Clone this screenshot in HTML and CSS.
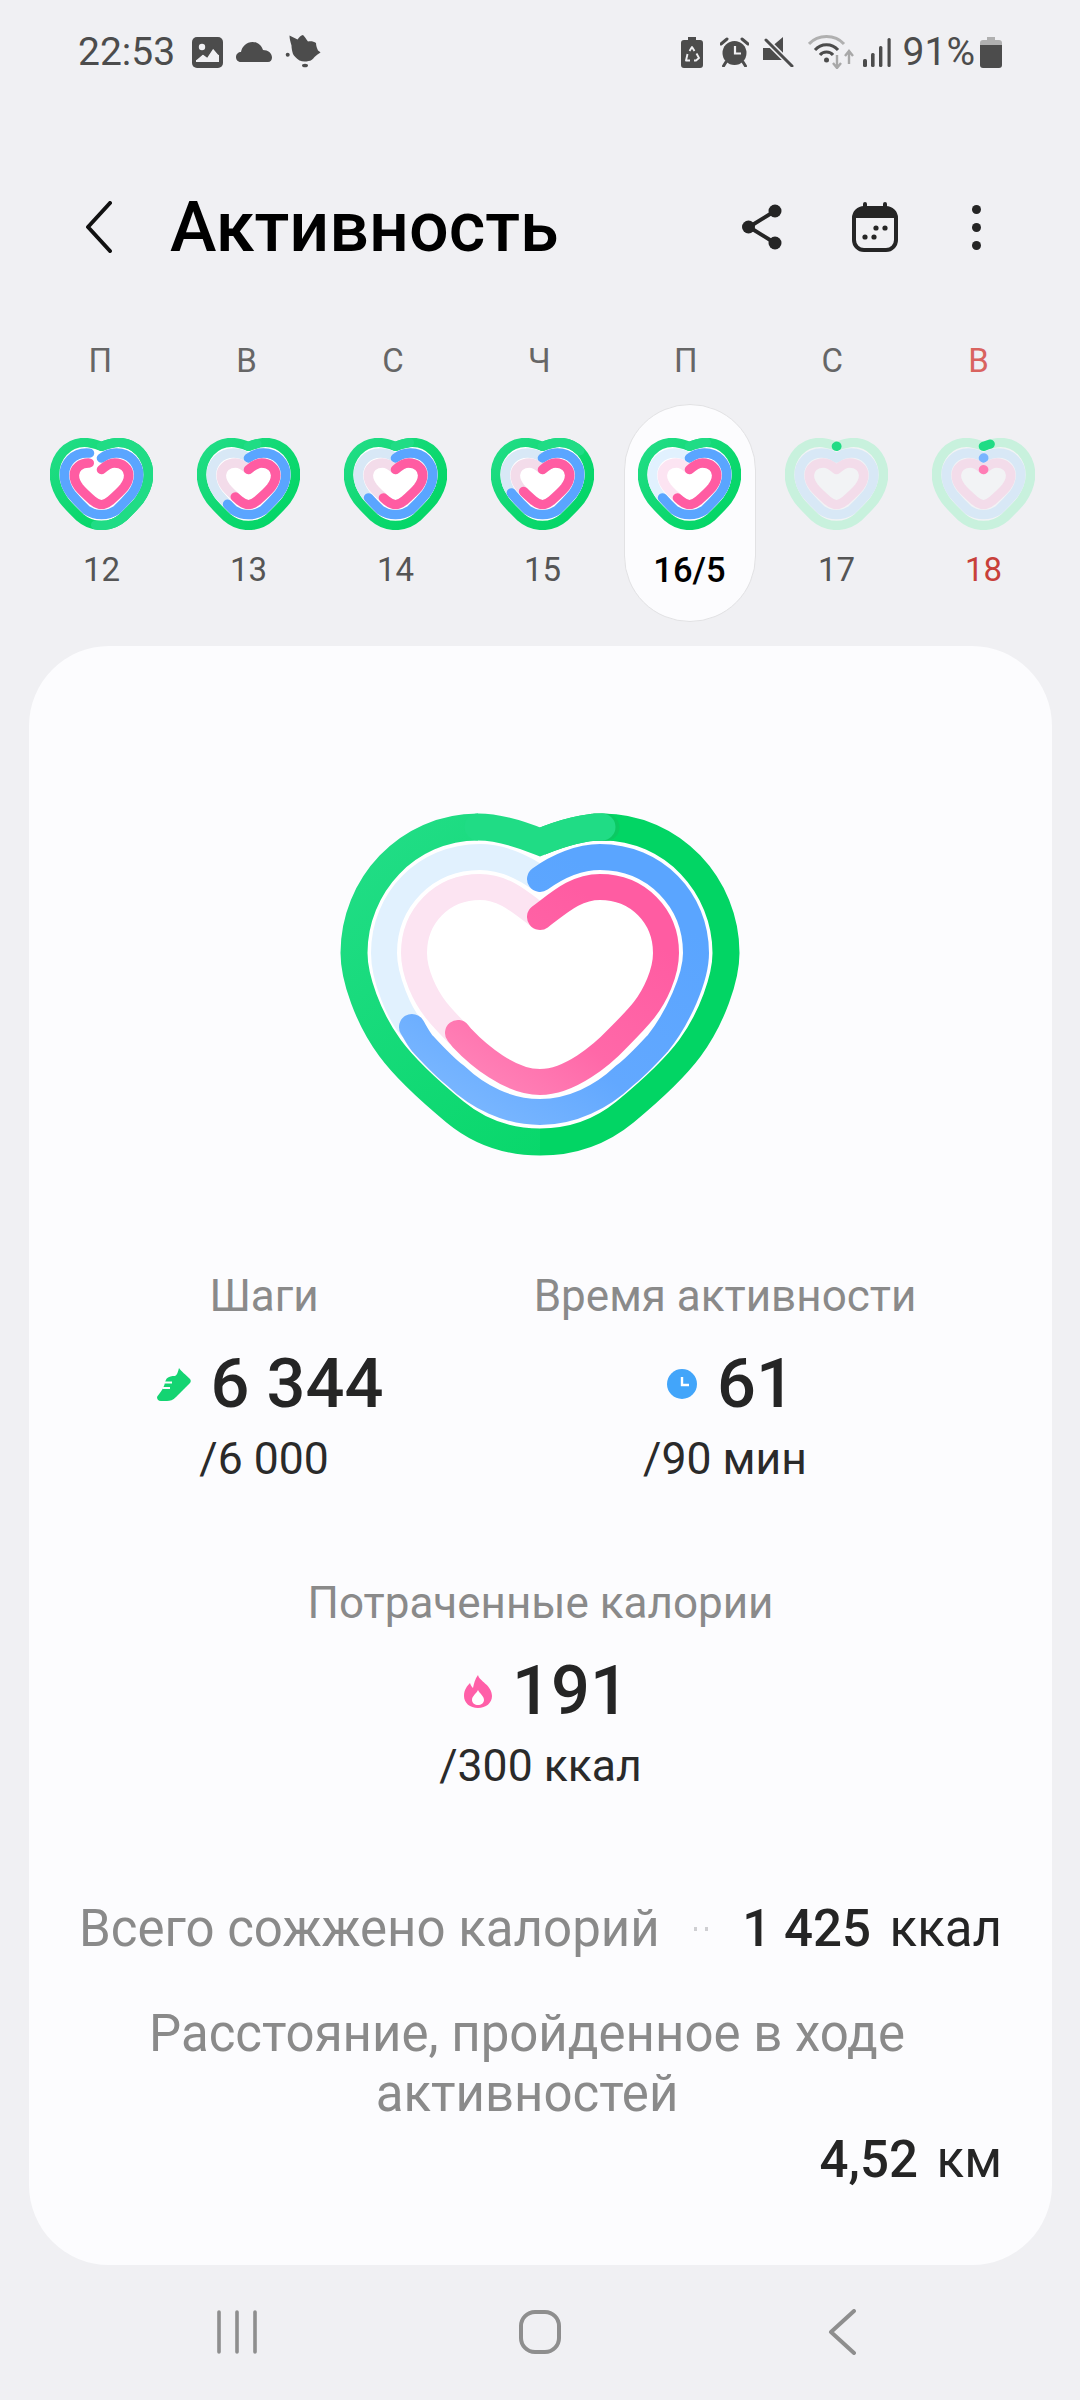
FILE: index.html
```html
<!DOCTYPE html>
<html lang="ru">

<head>
    <meta charset="UTF-8">
    <meta name="viewport" content="width=device-width, initial-scale=1.0">
    <title>Активность</title>
    <link rel="stylesheet" href="styles.css">
</head>

<body>
    <!-- Shared heart outlines, every path starts at the notch and runs clockwise -->
    <svg class="defs" aria-hidden="true">
        <defs>
            <linearGradient id="green-grad" x1="0" y1="0" x2="1" y2="1">
                <stop offset="0" stop-color="#22dd87"/>
                <stop offset="0.55" stop-color="#0dd86f"/>
                <stop offset="1" stop-color="#00d563"/>
            </linearGradient>
            <linearGradient id="big-green" gradientUnits="userSpaceOnUse" x1="-190" y1="20" x2="60" y2="330">
                <stop offset="0" stop-color="#22dd87"/>
                <stop offset="1" stop-color="#07d769"/>
            </linearGradient>
            <linearGradient id="big-blue" gradientUnits="userSpaceOnUse" x1="60" y1="60" x2="-90" y2="300">
                <stop offset="0" stop-color="#5aa5ff"/>
                <stop offset="0.6" stop-color="#62a8ff"/>
                <stop offset="1" stop-color="#7cb8ff"/>
            </linearGradient>
            <linearGradient id="big-pink" gradientUnits="userSpaceOnUse" x1="60" y1="90" x2="-60" y2="260">
                <stop offset="0" stop-color="#ff5ca2"/>
                <stop offset="0.6" stop-color="#ff68a8"/>
                <stop offset="1" stop-color="#ff80b6"/>
            </linearGradient>
            <path id="mg" pathLength="100" d="M0 8.6C6 6.4 11 4.6 17 4.6C34 4.6 47 19.6 47 38C47 47 44 55 38 64C33.5 70 27 76.5 21.5 82C15.5 87.5 8.5 90.3 0 90.3C-8.5 90.3 -15.5 87.5 -21.5 82C-27 76.5 -33.5 70 -38 64C-44 55 -47 47 -47 38C-47 19.6 -34 4.6 -17 4.6C-11 4.6 -6 6.4 0 8.6"/>
            <path id="mb" pathLength="100" d="M0 20.7C4 17.5 9 15.5 15 15.5C28 15.5 37.2 26 37.2 38C37.2 45 34.5 52 30.5 57.5C26 63 20.5 69 15 74.5C10 78 6 79.2 0 79.2C-6 79.2 -10 78 -15 74.5C-20.5 69 -26 63 -30.5 57.5C-34.5 52 -37.2 45 -37.2 38C-37.2 26 -28 15.5 -15 15.5C-9 15.5 -4 17.5 0 20.7"/>
            <path id="mp" pathLength="100" d="M0 32.7C4 29 9 25.8 13 25.8C21 25.8 27.2 31 27.2 38.5C27.2 43 25.5 47 22.5 51C18.5 56 13.5 60.5 8.5 65C6 67 3 68.9 0 68.9C-3 68.9 -6 67 -8.5 65C-13.5 60.5 -18.5 56 -22.5 51C-25.5 47 -27.2 43 -27.2 38.5C-27.2 31 -21 25.8 -13 25.8C-9 25.8 -4 29 0 32.7"/>
        </defs>
    </svg>

    <!-- Status bar -->
    <div class="status">
        <div class="status-left">
            <span class="time">22:53</span>
            <svg width="31" height="31" viewBox="0 0 31 31"><rect width="31" height="31" rx="5" fill="#4c4c4c"/><circle cx="10" cy="10" r="3.2" fill="#f0f0f3"/><path d="M4 23L11 17L15 20L21 11L27 18V25H4Z" fill="#f0f0f3"/><path d="M4 22.5L11 16.5L15 19.5L21 10.5L27 17.5" fill="none" stroke="#4c4c4c" stroke-width="1.6"/></svg>
            <svg width="36" height="20" viewBox="0 0 36 20"><path d="M5 20C1.5 20 0 17.5 0 15C0 12 2.5 10 5 10C6 4.5 10.5 0 16.5 0C22 0 25.5 3.5 27 8C32 8 36 11 36 15.5C36 18 34.5 20 32 20Z" fill="#4c4c4c"/></svg>
            <svg width="36" height="36" viewBox="0 0 36 36"><path d="M4.5 1.5C7 3 10 4 12.5 5.5C14 3.5 16 1 18 1C20 3 21 5 23 7.5C26 7 29 7.5 31 9C31 12 32 14 33 16.5C34 17 35 18 35.5 18.5C33 20 31 21.5 29.5 23C28 25 26 27 23.5 27C20 28 17 27.5 14.5 26.5C11 24 9 22 8 20C7 17 6.5 14 6.5 11.5C5.5 8 4.5 5 4.5 1.5Z" fill="#4c4c4c"/><circle cx="2.7" cy="20.7" r="2" fill="#4c4c4c"/><ellipse cx="20" cy="31.5" rx="3" ry="1.8" fill="#4c4c4c"/></svg>
        </div>
        <div class="status-right">
            <svg class="icon-recycle" width="22" height="31" viewBox="0 0 22 31"><path d="M7 0H15V3H19C21 3 22 4 22 6V28C22 30 21 31 19 31H3C1 31 0 30 0 28V6C0 4 1 3 3 3H7Z" fill="#4c4c4c"/><path d="M8.5 14L11 10L13.5 14M15.5 16.5L18 21L15 23.5H13M9 23.5H5L6.5 17" fill="none" stroke="#f0f0f3" stroke-width="1.9" stroke-linejoin="round"/></svg>
            <svg width="29" height="30" viewBox="0 0 29 30"><circle cx="14.5" cy="16" r="12" fill="#4c4c4c"/><path d="M15 9V16.5H21" fill="none" stroke="#f0f0f3" stroke-width="2.2"/><path d="M1 7L7 2M28 7L22 2M6 25L3.5 29M23 25L25.5 29" stroke="#4c4c4c" stroke-width="3" stroke-linecap="round"/></svg>
            <svg width="31" height="30" viewBox="0 0 31 30"><path d="M0 11H7L20 0V23H0Z" fill="#4c4c4c"/><path d="M1 1L29 29" stroke="#f0f0f3" stroke-width="6"/><path d="M3 3L29 29" stroke="#4c4c4c" stroke-width="3" stroke-linecap="round"/></svg>
            <svg class="icon-wifi" width="46" height="34" viewBox="0 0 46 34"><path d="M1 9C10 -1 27 -1 36 9" fill="none" stroke="#b0b0b0" stroke-width="3"/><path d="M7 15C13 8 24 8 30 15M12 20C15 16 22 16 25 20" fill="none" stroke="#4c4c4c" stroke-width="3"/><circle cx="18.5" cy="25" r="2.5" fill="#4c4c4c"/><path d="M29 20V32M25 28L29 33L33 28M41 29V17M37 21L41 16L45 21" fill="none" stroke="#a8a8a8" stroke-width="2.4"/></svg>
            <svg width="28" height="29" viewBox="0 0 28 29"><rect x="0" y="21" width="4" height="8" rx="1.5" fill="#4c4c4c"/><rect x="8" y="15" width="3.6" height="14" rx="1.5" fill="#4c4c4c"/><rect x="16" y="8" width="3.4" height="21" rx="1.5" fill="#4c4c4c"/><rect x="24.5" y="0" width="3.2" height="29" rx="1.5" fill="#4c4c4c"/></svg>
            <span class="percent">91%</span>
            <svg width="22" height="31" viewBox="0 0 22 31"><path d="M7 0H15V3H19C21 3 22 4 22 6V8H0V6C0 4 1 3 3 3H7Z" fill="#b0b0b0"/><path d="M0 8H22V28C22 30 21 31 19 31H3C1 31 0 30 0 28Z" fill="#4c4c4c"/></svg>
        </div>
    </div>

    <!-- Title row -->
    <header class="appbar">
        <svg class="back" width="27" height="52" viewBox="0 0 27 52"><path d="M25 2L3 26L25 50" fill="none" stroke="#111" stroke-width="4" stroke-linecap="round" stroke-linejoin="round"/></svg>
        <h1 class="title">Активность</h1>
        <svg class="share" width="40" height="46" viewBox="0 0 40 46"><path d="M33 7L7 23L33 39" fill="none" stroke="#252525" stroke-width="4"/><circle cx="33" cy="7" r="6.5" fill="#252525"/><circle cx="6.5" cy="23" r="6.5" fill="#252525"/><circle cx="33" cy="39" r="6.5" fill="#252525"/></svg>
        <svg class="calendar" width="46" height="50" viewBox="0 0 46 50"><path d="M13 7V2M33 7V2" stroke="#252525" stroke-width="4" stroke-linecap="round"/><rect x="2" y="6" width="42" height="42" rx="10" fill="none" stroke="#252525" stroke-width="4"/><path d="M2 16C2 10 6 6 12 6H34C40 6 44 10 44 16Z" fill="#252525"/><circle cx="24" cy="26" r="2.6" fill="#252525"/><circle cx="33" cy="26" r="2.6" fill="#252525"/><circle cx="13" cy="35" r="2.6" fill="#252525"/><circle cx="22" cy="35" r="2.6" fill="#252525"/></svg>
        <div class="more"><span></span><span></span><span></span></div>
    </header>

    <!-- Week -->
    <div class="week-letters">
        <span>П</span><span>В</span><span>С</span><span>Ч</span><span>П</span><span>С</span><span class="red-soft">В</span>
    </div>
    <div class="week">
        <div class="day">
            <svg class="ring" viewBox="-51.5 0 103 95" preserveAspectRatio="none">
                <use href="#mg" class="r-fill"/>
                <use href="#mg" class="r-line" stroke="url(#green-grad)"/>
                <use href="#mg" class="r-line r-over" stroke-dasharray="52 100"/>
                <use href="#mb" class="r-line r-blue" stroke-dasharray="94 100"/>
                <use href="#mp" class="r-line r-pink" stroke-dasharray="91 100"/>
            </svg>
            <span class="num">12</span>
        </div>
        <div class="day">
            <svg class="ring" viewBox="-51.5 0 103 95" preserveAspectRatio="none">
                <use href="#mg" class="r-fill"/>
                <use href="#mg" class="r-line" stroke="url(#green-grad)"/>
                <use href="#mg" class="r-line r-over" stroke-dasharray="3 100"/>
                <use href="#mb" class="r-line r-blue-pale"/>
                <use href="#mb" class="r-line r-blue" stroke-dasharray="61 100"/>
                <use href="#mp" class="r-line r-pink-pale"/>
                <use href="#mp" class="r-line r-pink" stroke-dasharray="60 100"/>
            </svg>
            <span class="num">13</span>
        </div>
        <div class="day">
            <svg class="ring" viewBox="-51.5 0 103 95" preserveAspectRatio="none">
                <use href="#mg" class="r-fill"/>
                <use href="#mg" class="r-line" stroke="url(#green-grad)"/>
                <use href="#mg" class="r-line r-over" stroke-dasharray="5 100"/>
                <use href="#mb" class="r-line r-blue-pale"/>
                <use href="#mb" class="r-line r-blue" stroke-dasharray="65 100"/>
                <use href="#mp" class="r-line r-pink-pale"/>
                <use href="#mp" class="r-line r-pink" stroke-dasharray="59 100"/>
            </svg>
            <span class="num">14</span>
        </div>
        <div class="day">
            <svg class="ring" viewBox="-51.5 0 103 95" preserveAspectRatio="none">
                <use href="#mg" class="r-fill"/>
                <use href="#mg" class="r-line" stroke="url(#green-grad)"/>
                <use href="#mg" class="r-line r-over" stroke-dasharray="14 100"/>
                <use href="#mb" class="r-line r-blue-pale"/>
                <use href="#mb" class="r-line r-blue" stroke-dasharray="68 100"/>
                <use href="#mp" class="r-line r-pink-pale"/>
                <use href="#mp" class="r-line r-pink" stroke-dasharray="65 100"/>
            </svg>
            <span class="num">15</span>
        </div>
        <div class="day day-now">
            <svg class="ring" viewBox="-51.5 0 103 95" preserveAspectRatio="none">
                <use href="#mg" class="r-fill"/>
                <use href="#mg" class="r-line" stroke="url(#green-grad)"/>
                <use href="#mg" class="r-line r-over" stroke-dasharray="6 100"/>
                <use href="#mb" class="r-line r-blue-pale"/>
                <use href="#mb" class="r-line r-blue" stroke-dasharray="65 100"/>
                <use href="#mp" class="r-line r-pink-pale"/>
                <use href="#mp" class="r-line r-pink" stroke-dasharray="59 100"/>
            </svg>
            <span class="num">16/5</span>
        </div>
        <div class="day day-empty">
            <svg class="ring" viewBox="-51.5 0 103 95" preserveAspectRatio="none">
                <use href="#mg" class="r-fill"/>
                <use href="#mg" class="r-line r-green-pale"/>
                <use href="#mg" class="r-line r-over" stroke-dasharray="0.1 100"/>
                <use href="#mb" class="r-line r-blue-pale"/>
                <use href="#mp" class="r-line r-pink-pale"/>
            </svg>
            <span class="num">17</span>
        </div>
        <div class="day day-empty">
            <svg class="ring" viewBox="-51.5 0 103 95" preserveAspectRatio="none">
                <use href="#mg" class="r-fill"/>
                <use href="#mg" class="r-line r-green-pale"/>
                <use href="#mg" class="r-line r-over" stroke-dasharray="2.4 100"/>
                <use href="#mb" class="r-line r-blue-pale"/>
                <use href="#mb" class="r-line r-blue-dot" stroke-dasharray="0.1 100"/>
                <use href="#mp" class="r-line r-pink-pale"/>
                <use href="#mp" class="r-line r-pink-dot" stroke-dasharray="0.1 100"/>
            </svg>
            <span class="num red">18</span>
        </div>
    </div>

    <!-- Main card -->
    <main class="card">
        <svg class="big-heart" width="400" height="344" viewBox="-200 0 400 344">
            <path d="M0 29C22 20 42 14 62 14C133 14 186 73 186 140C186 165 172 205 150 235C133 258 108 280 85 299C62 318 34 329 0 329C-34 329 -62 318 -85 299C-108 280 -133 258 -150 235C-172 205 -186 165 -186 140C-186 73 -133 14 -62 14C-42 14 -22 20 0 29" fill="#fff"/>
            <!-- green, dark on the right, lighter overlap across the notch -->
            <path class="big-line big-green" stroke="#02d564" d="M0 29C22 20 42 14 62 14C133 14 186 73 186 140C186 165 172 205 150 235C133 258 108 280 85 299C62 318 34 329 0 329"/>
            <path class="big-line big-green" stroke="url(#big-green)" d="M0 329C-34 329 -62 318 -85 299C-108 280 -133 258 -150 235C-172 205 -186 165 -186 140C-186 73 -133 14 -62 14"/>
            <path class="big-line big-green" stroke="#0bc962" stroke-linecap="round" d="M54 14L66 14.3"/>
            <path class="big-line big-green" stroke="#20dc85" stroke-linecap="round" d="M-62 14C-42 14 -22 20 0 29C22 20 42 14 62 14"/>
            <!-- blue -->
            <path class="big-line" stroke="#e1f1fe" d="M0 66C-18 53 -40 44 -60 44C-115 44 -156 87 -156 140C-156 165 -140 203 -128 215"/>
            <path class="big-line" stroke="url(#big-blue)" stroke-linecap="round" d="M0 66C18 53 40 44 60 44C115 44 156 87 156 140C156 165 138 205 118 230C106 243 96 254 84 263C62 284 32 299 0 299C-32 299 -62 284 -84 263C-96 254 -106 243 -118 230C-122 225 -125 219 -128 214"/>
            <!-- pink -->
            <path class="big-line" stroke="#fce4f2" d="M0 104C-20 89 -36 74 -60 74C-98 74 -126 103 -126 140C-126 160 -115 183 -104 197C-96 207 -88 215 -81 222"/>
            <path class="big-line" stroke="url(#big-pink)" stroke-linecap="round" d="M0 104C20 89 36 74 60 74C98 74 126 103 126 140C126 160 115 183 104 197C96 207 87 216 78 225C62 242 30 269 0 269C-30 269 -62 242 -78 225L-82 220"/>
        </svg>

        <section class="stats-top">
            <div class="stat">
                <span class="stat-label">Шаги</span>
                <div class="stat-value">
                    <svg class="stat-icon" width="34" height="33" viewBox="0 0 34 33"><path d="M22 0C24 3 29 7 33 11C34 12 34 14 33 15L19 29C16 32 13 33 10 33H4C1 33 0 31 0 29C2 26 6 22 8 15C9 10 11 8 18 8C20 7 21 4 22 0Z" fill="#14d472"/><path d="M8 14.5H15M5.5 20H13" stroke="#fcfcfe" stroke-width="2.2"/></svg>
                    <span>6 344</span>
                </div>
                <span class="stat-goal">/6 000</span>
            </div>
            <div class="stat">
                <span class="stat-label">Время активности</span>
                <div class="stat-value">
                    <svg class="stat-icon" width="30" height="30" viewBox="0 0 30 30"><circle cx="15" cy="15" r="15" fill="#42a5fa"/><path d="M15 8V16H22" fill="none" stroke="#fff" stroke-width="2.4"/></svg>
                    <span>61</span>
                </div>
                <span class="stat-goal">/90 мин</span>
            </div>
        </section>

        <section class="stat stat-wide">
            <span class="stat-label">Потраченные калории</span>
            <div class="stat-value">
                <svg class="stat-icon" width="28" height="33" viewBox="0 0 28 33"><path d="M14 0C15 6 28 10 28 21C28 28 22 33 14 33C6 33 0 28 0 21C0 15 3 11 6 8C7 11 8 12 9 13C10 8 11 4 14 0Z" fill="#ff5fa8"/><path d="M14 15C16 19 20 21 20 25C20 28 17 30 14 30C11 30 8 28 8 25C8 21 12 19 14 15Z" fill="#fff"/></svg>
                <span>191</span>
            </div>
            <span class="stat-goal">/300 ккал</span>
        </section>

        <div class="line">
            <span class="line-label">Всего сожжено калорий</span>
            <span class="dots"><i></i><i></i></span>
            <span class="line-value"><b>1 425</b> ккал</span>
        </div>
        <p class="line-label line-center">Расстояние, пройденное в ходе активностей</p>
        <p class="line-value line-end"><b>4,52</b> км</p>
    </main>

    <!-- Navigation bar -->
    <nav class="navbar">
        <svg width="44" height="44" viewBox="0 0 44 44"><path d="M4 2V42M22 2V42M40 2V42" stroke="#8e8e8e" stroke-width="3.6" stroke-linecap="round"/></svg>
        <svg width="46" height="44" viewBox="0 0 46 44"><rect x="4" y="2" width="38" height="40" rx="14" fill="none" stroke="#8e8e8e" stroke-width="4"/></svg>
        <svg width="29" height="46" viewBox="0 0 29 46"><path d="M26 2L3 23L26 44" fill="none" stroke="#8e8e8e" stroke-width="4" stroke-linecap="round" stroke-linejoin="round"/></svg>
    </nav>
</body>

</html>
```

FILE: styles.css
```css
* {
    box-sizing: border-box;
    margin: 0;
    padding: 0;
}

body {
    width: 1080px;
    height: 2400px;
    overflow: hidden;
    font-family: Roboto, "Noto Sans", sans-serif;
    background-color: #f0f0f3;
    color: #252525;
}

.defs {
    display: block;
    width: 0;
    height: 0;
}

/* Status bar */
.status {
    height: 104px;
    padding: 0 78px 0 78px;
    display: flex;
    justify-content: space-between;
    align-items: center;
    color: #4c4c4c;
    font-size: 39px;
}

.status-left,
.status-right {
    display: flex;
    align-items: center;
}

.status-left {
    gap: 13px;
}

.status-left .time {
    margin-right: 4px;
}

.status-right {
    gap: 14px;
}

.icon-recycle {
    margin-right: 3px;
}

.icon-wifi {
    margin-right: -5px;
}

.percent {
    margin-left: -2px;
    margin-right: -9px;
}

/* Title row */
.appbar {
    margin-top: 66px;
    height: 114px;
    padding-left: 85px;
    display: flex;
    align-items: center;
}

.title {
    margin-left: 58px;
    font-size: 70px;
    font-weight: 500;
    color: #000;
}

.share {
    margin-left: auto;
}

.calendar {
    margin-left: 70px;
}

.more {
    width: 9px;
    margin-left: 74px;
    margin-right: 99px;
    display: flex;
    flex-direction: column;
    gap: 9px;
}

.more span {
    width: 9px;
    height: 9px;
    border-radius: 50%;
    background-color: #252525;
}

/* Week strip */
.week-letters {
    margin-top: 57px;
    padding-left: 27px;
    display: grid;
    grid-template-columns: repeat(7, 146.4px);
    font-size: 33px;
    line-height: 40px;
    text-align: center;
    color: #666;
}

.red-soft {
    color: #d9635f;
}

.week {
    margin-top: 23px;
    padding-left: 28px;
    display: grid;
    grid-template-columns: repeat(7, 147px);
}

.day {
    width: 132px;
    height: 218px;
    padding-top: 33px;
    display: flex;
    flex-direction: column;
    align-items: center;
    justify-self: center;
    border: 1px solid transparent;
    border-radius: 66px;
}

.day-now {
    background-color: #fcfcfe;
    border-color: #e2e2e4;
}

.ring {
    width: 103px;
    height: 92px;
    flex: none;
}

.num {
    margin-top: 20px;
    font-size: 33px;
    line-height: 40px;
    color: #555;
}

.day-now .num {
    font-size: 34.5px;
    font-weight: 500;
    color: #000;
}

.num.red {
    color: #c8403a;
}

.ring use {
    fill: none;
}

.ring .r-fill {
    fill: #fff;
}

.day-empty .r-fill {
    fill: #f2f3f5;
}

.r-line {
    stroke-width: 9.6;
    stroke-linecap: round;
}

.r-over {
    stroke: #20dc85;
}

.r-blue {
    stroke: #5aa5ff;
}

.r-pink {
    stroke: #ff5ca2;
}

.r-blue-pale {
    stroke: #d8e8f6;
}

.r-pink-pale {
    stroke: #f3dcea;
}

.r-green-pale {
    stroke: #c8f1dd;
}

.r-blue-dot {
    stroke: #78b4ff;
}

.r-pink-dot {
    stroke: #ff7db5;
}

.day-now .r-blue-pale {
    stroke: #e1f1fe;
}

.day-now .r-pink-pale {
    stroke: #fce4f2;
}

/* Main card */
.card {
    margin: 24px 28px 0 29px;
    padding: 167px 50px 75px;
    background-color: #fcfcfe;
    border-radius: 80px;
    display: flex;
    flex-direction: column;
    align-items: center;
}

.big-heart {
    margin-right: 2px;
}

.big-line {
    fill: none;
    stroke-width: 26;
    stroke-linejoin: miter;
}

.big-green {
    stroke-width: 27;
}

.stats-top {
    width: 922px;
    margin-top: 114px;
    margin-left: -50px;
    align-self: flex-start;
    display: grid;
    grid-template-columns: 470px 452px;
}

.stat {
    display: flex;
    flex-direction: column;
    align-items: center;
}

.stat-wide {
    margin-top: 94px;
}

.stat-label {
    font-size: 44px;
    line-height: 50px;
    color: #8a8a8a;
}

.stat-value {
    margin-top: 27px;
    margin-left: 12px;
    display: flex;
    align-items: center;
    font-size: 68.5px;
    font-weight: 500;
    line-height: 72px;
    color: #252525;
}

.stat-icon {
    margin-right: 20px;
}

.stat-goal {
    margin-top: 14px;
    font-size: 44.5px;
    line-height: 50px;
    color: #2a2a2a;
}

/* Bottom lines */
.line {
    width: 100%;
    margin-top: 108px;
    display: flex;
    justify-content: space-between;
    align-items: center;
}

.line-label {
    font-size: 51px;
    line-height: 60px;
    color: #8a8a8a;
}

.line-value {
    font-size: 51px;
    line-height: 60px;
    color: #252525;
}

.line-value b {
    font-weight: 500;
    margin-right: 6px;
}

.dots {
    display: flex;
    gap: 8px;
}

.dots i {
    width: 3px;
    height: 4px;
    background-color: #cfcfd2;
}

.line-center {
    margin-top: 45px;
    margin-right: 27px;
    width: 800px;
    text-align: center;
}

.line-end {
    margin-top: 6px;
    align-self: flex-end;
}

/* Navigation bar */
.navbar {
    padding: 44px 0 0 85px;
    display: grid;
    grid-template-columns: repeat(3, 303px);
    justify-items: center;
    align-items: center;
}
```
